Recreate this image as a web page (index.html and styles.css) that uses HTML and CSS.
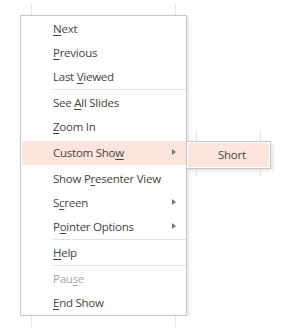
FILE: index.html
```html
<!DOCTYPE html>
<html lang="en">
<head>
  <meta charset="UTF-8" />
  <title>Slide Show Menu</title>
  <link rel="stylesheet" href="styles.css">
</head>
<body>

  <!-- faint guide marks behind the menu -->
  <span class="mark" style="left:31px; top:4px"></span>
  <span class="mark" style="left:175px; top:4px"></span>
  <span class="mark" style="left:31px; top:316px"></span>
  <span class="mark" style="left:175px; top:316px"></span>
  <span class="mark" style="left:196px; top:130px"></span>
  <span class="mark" style="left:260px; top:130px"></span>
  <span class="mark short-mark" style="left:196px; top:170px"></span>
  <span class="mark short-mark" style="left:260px; top:170px"></span>

  <div class="menu">
    <div class="item"><u>N</u>ext</div>
    <div class="item"><u>P</u>revious</div>
    <div class="item">Last <u>V</u>iewed</div>
    <div class="sep"></div>
    <div class="item">See <u>A</u>ll Slides</div>
    <div class="item"><u>Z</u>oom In</div>
    <div class="item active has-sub">Custom Sho<u>w</u>
      <div class="submenu">
        <div class="item sub-item">Short</div>
      </div>
    </div>
    <div class="item">Show P<u>r</u>esenter View</div>
    <div class="item has-sub">S<u>c</u>reen</div>
    <div class="item has-sub">P<u>o</u>inter Options</div>
    <div class="sep"></div>
    <div class="item"><u>H</u>elp</div>
    <div class="sep"></div>
    <div class="item disabled">Pau<u>s</u>e</div>
    <div class="item"><u>E</u>nd Show</div>
  </div>

</body>
</html>
```

FILE: styles.css
```css
body {
  margin: 0;
  padding: 15px 0 0 20px;
  background: #fff;
  font-family: 'Open Sans', 'Noto Sans', sans-serif;
  font-size: 11.5px;
  letter-spacing: -0.25px;
  color: #444;
}

.mark {
  position: absolute;
  width: 1px;
  height: 11px;
  background: #e4e4e4;
}

.short-mark {
  height: 6px;
}

.menu {
  position: relative;
  width: 164px;
  padding: 1px 0 0 1px;
  border: 1px solid #c6c6c6;
  background: #fff;
  box-shadow: 2px 2px 3px rgba(0, 0, 0, 0.1);
}

.item {
  position: relative;
  height: 24px;
  line-height: 24px;
  padding-left: 31px;
  white-space: nowrap;
}

u {
  text-decoration-thickness: 1px;
  text-underline-offset: 2px;
}

.active {
  margin: 2px 0;
  background: #fde4dc;
}

.has-sub::after {
  content: "";
  position: absolute;
  right: 10px;
  top: 8px;
  border-left: 4px solid #777;
  border-top: 3.5px solid transparent;
  border-bottom: 3.5px solid transparent;
}

.disabled {
  color: #a6a6a6;
}

.sep {
  height: 1px;
  margin: 0 0 1px 31px;
  background: #e1e1e1;
}

.submenu {
  position: absolute;
  left: 164px;
  top: 0;
  width: 81px;
  padding: 1px;
  border: 1px solid #c6c6c6;
  background: #fff;
  box-shadow: 2px 2px 3px rgba(0, 0, 0, 0.1);
}

.sub-item {
  padding-left: 30px;
  background: #fde4dc;
}
```
